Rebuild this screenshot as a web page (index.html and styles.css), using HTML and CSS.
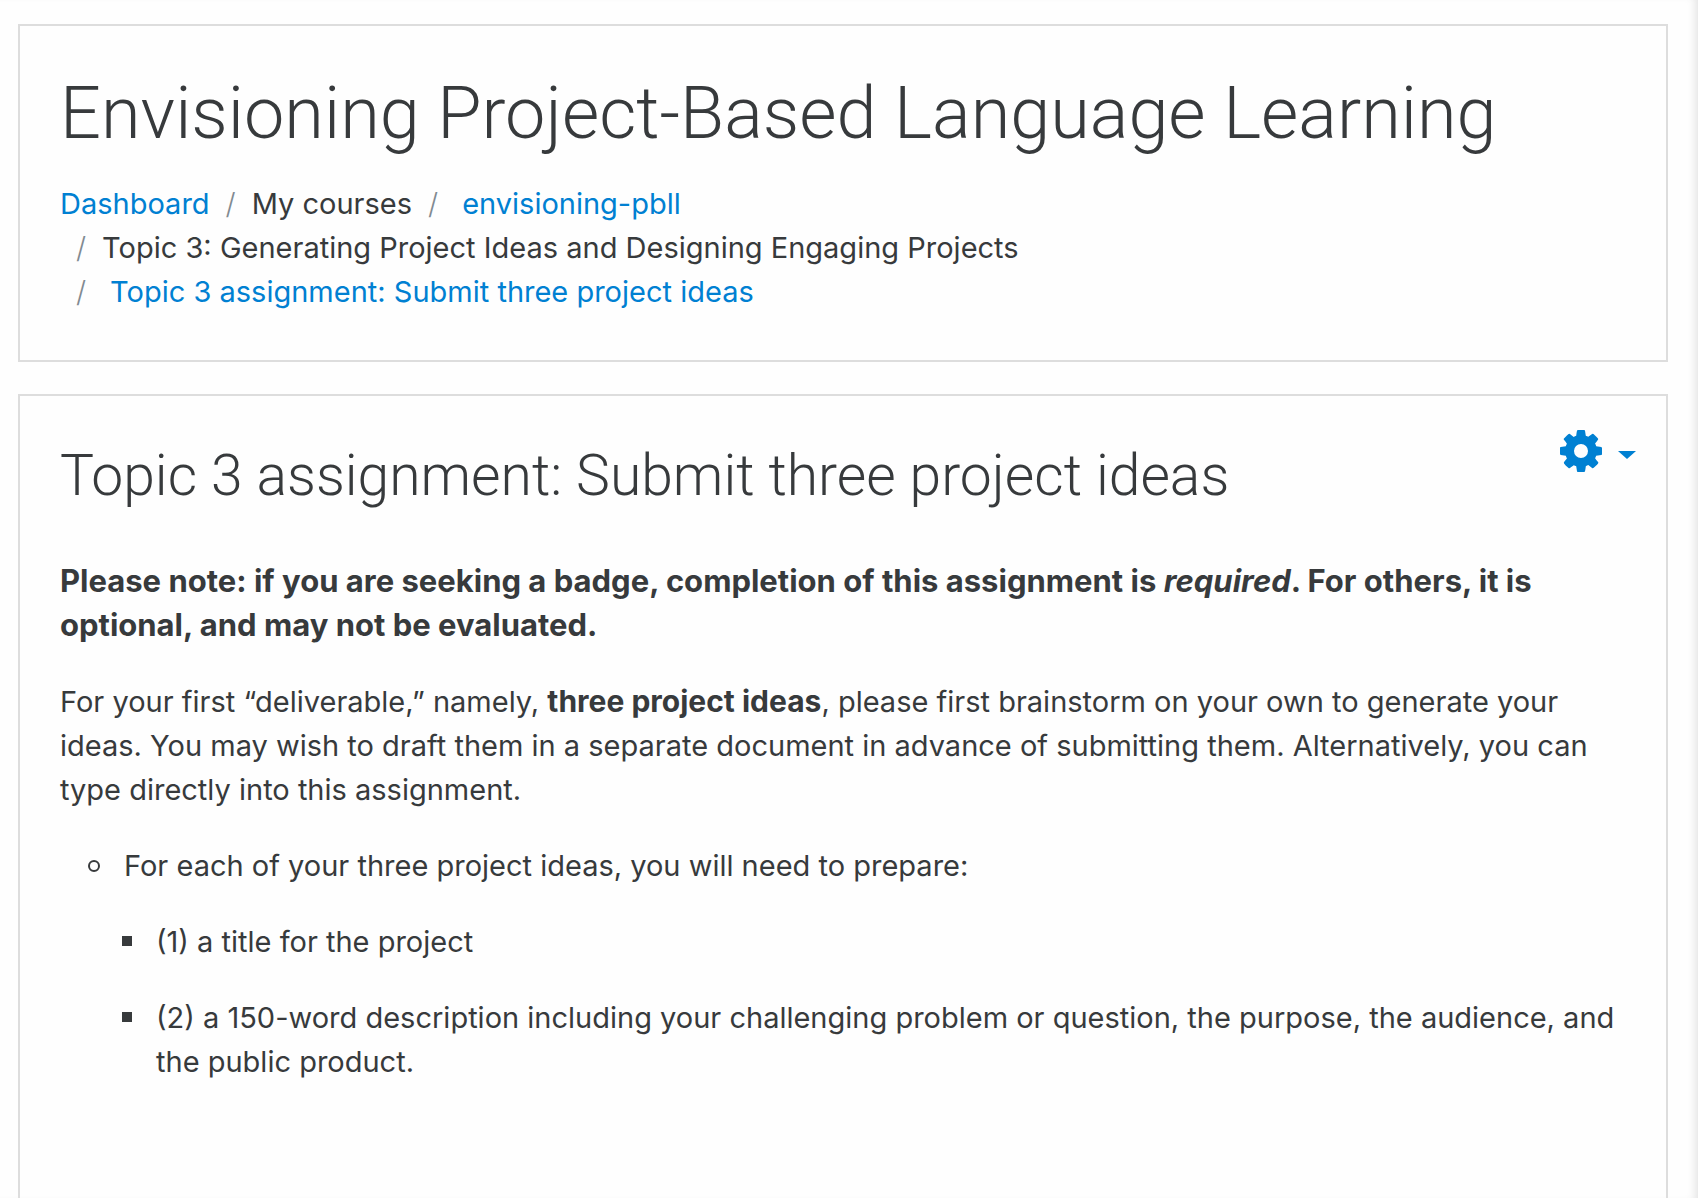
FILE: index.html
```html
<!DOCTYPE html>
<html lang="en">
<head>
    <meta charset="UTF-8">
    <meta name="viewport" content="width=device-width, initial-scale=1.0">
    <title>Topic 3 assignment: Submit three project ideas</title>
    <link rel="stylesheet" href="styles.css">
</head>
<body>
    <div class="page">
        <header class="card page-header">
            <h1>Envisioning Project-Based Language Learning</h1>
            <nav aria-label="Breadcrumb">
                <ol class="breadcrumb">
                    <li><a href="#">Dashboard</a></li>
                    <li>My courses</li>
                    <li><a href="#" class="indent">envisioning-pbll</a></li>
                    <li>Topic 3: Generating Project Ideas and Designing Engaging Projects</li>
                    <li><a href="#" class="indent">Topic 3 assignment: Submit three project ideas</a></li>
                </ol>
            </nav>
        </header>

        <main class="card main-content">
            <button type="button" class="settings-btn" aria-label="Actions menu">
                <svg class="cog" viewBox="128 128 1536 1536" aria-hidden="true">
                    <path d="M1152 896q0-106-75-181t-181-75-181 75-75 181 75 181 181 75 181-75 75-181zm512-109v222q0 12-8 23t-20 13l-185 28q-19 54-39 91 35 50 107 138 10 12 10 25t-9 23q-27 37-99 108t-94 71q-12 0-26-9l-138-108q-44 23-91 38-16 136-29 186-7 28-36 28h-222q-14 0-24.5-8.5t-11.5-21.5l-28-184q-49-16-90-37l-141 107q-10 9-25 9-14 0-25-11-126-114-165-168-7-10-7-23 0-12 8-23 15-21 51-66.5t54-70.5q-27-50-41-99l-183-27q-13-2-21-12.5t-8-23.5v-222q0-12 8-23t19-13l186-28q14-46 39-92-40-57-107-138-10-12-10-24 0-10 9-23 26-36 98.5-107.5t94.5-71.5q13 0 26 10l138 107q44-23 91-38 16-136 29-186 7-28 36-28h222q14 0 24.5 8.5t11.5 21.5l28 184q49 16 90 37l142-107q9-9 24-9 13 0 25 10 129 119 165 170 7 8 7 22 0 12-8 23-15 21-51 66.5t-54 70.5q26 50 41 98l183 28q13 2 21 12.5t8 23.5z"/>
                </svg>
                <span class="caret"></span>
            </button>
            <h2>Topic 3 assignment: Submit three project ideas</h2>
            <p><strong class="notice">Please note: if you are seeking a badge, completion of this assignment is <em>required</em>. For others, it is optional, and may not be evaluated.</strong></p>
            <p>For your first “deliverable,” namely, <strong>three project ideas</strong>, please first brainstorm on your own to generate your ideas. You may wish to draft them in a separate document in advance of submitting them. Alternatively, you can type directly into this assignment.</p>
            <ul class="steps">
                <li>
                    <p>For each of your three project ideas, you will need to prepare:</p>
                    <ul class="sub-steps">
                        <li><p>(1) a title for the project</p></li>
                        <li><p>(2) a 150-word description including your challenging problem or question, the purpose, the audience, and the public product.</p></li>
                    </ul>
                </li>
            </ul>
        </main>
    </div>
</body>
</html>
```

FILE: styles.css
```css
:root {
    --text-color: #373a3c;
    --link-color: #0080d2;
    --muted-color: #818a91;
    --border-color: #dddddd;
}

* {
    margin: 0;
    padding: 0;
    box-sizing: border-box;
}

body {
    font-family: Inter, 'Liberation Sans', sans-serif;
    font-size: 29px;
    line-height: 44px;
    color: var(--text-color);
    background-color: #fefefe;
}

a {
    color: var(--link-color);
    text-decoration: none;
}

a:hover {
    text-decoration: underline;
}

strong {
    font-size: 30px;
    font-weight: 700;
    line-height: 1;
}

.notice {
    font-size: 31px;
}

.page {
    display: flex;
    flex-direction: column;
    gap: 32px;
    min-height: 100vh;
    padding: 24px 30px 0 18px;
    box-shadow: inset -8px 0 10px -6px rgba(0, 0, 0, 0.12);
}

.card {
    border: 2px solid var(--border-color);
    padding: 40px;
}

h1, h2 {
    font-family: Roboto, Inter, sans-serif;
    font-weight: 300;
}

h1 {
    font-size: 72px;
    line-height: 96px;
    margin-bottom: 20px;
}

h2 {
    font-size: 57px;
    line-height: 80px;
    margin-bottom: 44px;
}

p {
    margin-bottom: 32px;
}

.breadcrumb {
    display: flex;
    flex-wrap: wrap;
    list-style: none;
    margin-bottom: 6px;
}

.breadcrumb li + li::before {
    content: "/";
    padding: 0 16px;
    font-weight: 300;
    color: var(--muted-color);
}

.breadcrumb .indent {
    padding-left: 8px;
}

.main-content {
    flex: 1;
    border-bottom: none;
}

.settings-btn {
    float: right;
    display: flex;
    align-items: center;
    gap: 16px;
    margin: -6px -10px 0 0;
    padding: 0;
    border: none;
    background: none;
    cursor: pointer;
}

.cog {
    width: 42px;
    height: 42px;
    fill: var(--link-color);
}

.caret {
    border: 9px solid transparent;
    border-top: 8px solid var(--link-color);
    border-bottom: none;
    margin-top: 8px;
}

.steps, .sub-steps {
    list-style: none;
}

.steps {
    padding-left: 64px;
}

.sub-steps {
    padding-left: 32px;
}

/* list markers */
.steps p::before {
    content: "";
    display: inline-block;
    width: 8px;
    height: 8px;
    margin: 0 24px 4px -36px;
    border: 2px solid var(--text-color);
    border-radius: 50%;
}

.sub-steps p::before {
    width: 10px;
    height: 10px;
    margin: 0 24px 6px -34px;
    border: none;
    border-radius: 0;
    background-color: var(--text-color);
}
```
